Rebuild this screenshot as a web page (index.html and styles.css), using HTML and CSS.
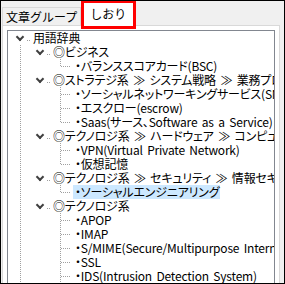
FILE: index.html
```html
<!DOCTYPE html>
<html lang="ja">
<head>
  <meta charset="UTF-8" />
  <title>しおり</title>
  <link rel="stylesheet" href="styles.css">
</head>
<body>
  <div class="window">
    <div class="tabs">
      <div class="tab">文章グループ</div>
      <div class="tab active">しおり</div>
    </div>
    <div class="panel">
      <div class="tree">
        <!-- ルート -->
        <div class="row">
          <span class="cell open"></span>
          <span class="label">用語辞典</span>
        </div>

        <div class="row">
          <span class="cell guide"></span>
          <span class="cell open"></span>
          <span class="label">◎ビジネス</span>
        </div>
        <div class="row">
          <span class="cell guide"></span>
          <span class="cell"></span>
          <span class="cell leaf last"></span>
          <span class="label">・バランススコアカード(BSC)</span>
        </div>

        <div class="row">
          <span class="cell guide"></span>
          <span class="cell open"></span>
          <span class="label">◎ストラテジ系 ≫ システム戦略 ≫ 業務プロセス</span>
        </div>
        <div class="row">
          <span class="cell guide"></span>
          <span class="cell"></span>
          <span class="cell leaf"></span>
          <span class="label">・ソーシャルネットワーキングサービス(SNS)</span>
        </div>
        <div class="row">
          <span class="cell guide"></span>
          <span class="cell"></span>
          <span class="cell leaf"></span>
          <span class="label">・エスクロー(escrow)</span>
        </div>
        <div class="row">
          <span class="cell guide"></span>
          <span class="cell"></span>
          <span class="cell leaf last"></span>
          <span class="label">・Saas(サース、Software as a Service)</span>
        </div>

        <div class="row">
          <span class="cell guide"></span>
          <span class="cell open"></span>
          <span class="label">◎テクノロジ系 ≫ ハードウェア ≫ コンピュータ構成要素</span>
        </div>
        <div class="row">
          <span class="cell guide"></span>
          <span class="cell"></span>
          <span class="cell leaf"></span>
          <span class="label">・VPN(Virtual Private Network)</span>
        </div>
        <div class="row">
          <span class="cell guide"></span>
          <span class="cell"></span>
          <span class="cell leaf last"></span>
          <span class="label">・仮想記憶</span>
        </div>

        <div class="row">
          <span class="cell guide"></span>
          <span class="cell open"></span>
          <span class="label">◎テクノロジ系 ≫ セキュリティ ≫ 情報セキュリティ</span>
        </div>
        <div class="row">
          <span class="cell guide"></span>
          <span class="cell"></span>
          <span class="cell leaf last"></span>
          <span class="label selected">・ソーシャルエンジニアリング</span>
        </div>

        <div class="row">
          <span class="cell guide"></span>
          <span class="cell open"></span>
          <span class="label">◎テクノロジ系</span>
        </div>
        <div class="row">
          <span class="cell guide"></span>
          <span class="cell"></span>
          <span class="cell leaf"></span>
          <span class="label">・APOP</span>
        </div>
        <div class="row">
          <span class="cell guide"></span>
          <span class="cell"></span>
          <span class="cell leaf"></span>
          <span class="label">・IMAP</span>
        </div>
        <div class="row">
          <span class="cell guide"></span>
          <span class="cell"></span>
          <span class="cell leaf"></span>
          <span class="label">・S/MIME(Secure/Multipurpose Internet Mail Extensions)</span>
        </div>
        <div class="row">
          <span class="cell guide"></span>
          <span class="cell"></span>
          <span class="cell leaf"></span>
          <span class="label">・SSL</span>
        </div>
        <div class="row">
          <span class="cell guide"></span>
          <span class="cell"></span>
          <span class="cell leaf"></span>
          <span class="label">・IDS(Intrusion Detection System)</span>
        </div>
      </div>
    </div>
  </div>
</body>
</html>
```

FILE: styles.css
```css
body {
  margin: 0;
  font-family: "MS UI Gothic", "Noto Sans CJK JP", sans-serif;
  font-size: 12px;
  color: #000;
}
.window {
  box-sizing: border-box;
  width: 285px;
  height: 284px;
  border: 1px solid #000;
  background: #f0f0f0;
  overflow: hidden;
  display: flex;
  flex-direction: column;
}
.tabs {
  display: flex;
  align-items: flex-start;
  height: 24px;
  padding-left: 1px;
}
.tab {
  box-sizing: border-box;
  margin-top: 6px;
  height: 18px;
  padding: 0 3px;
  border: 1px solid #d9d9d9;
  border-bottom: none;
  line-height: 17px;
}
.tab.active {
  position: relative;
  z-index: 1;
  margin-top: -1px;
  height: 29px;
  padding: 0 7px 0 6px;
  border: 3px solid #f00;
  background: #fff;
  line-height: 22px;
}
.panel {
  flex: 1;
  margin-left: 1px;
  width: 278px;
  box-sizing: border-box;
  border: 1px solid #d9d9d9;
  border-bottom: none;
  background: #fff;
  padding: 4px 4px 0;
  display: flex;
  flex-direction: column;
}
.tree {
  flex: 1;
  border: 1px solid #828790;
  border-bottom: none;
  padding-left: 2px;
  overflow: hidden;
  font-feature-settings: "palt";
  letter-spacing: -0.2px;
  word-spacing: 2px;
}
.row {
  display: flex;
  height: 14px;
  line-height: 14px;
  white-space: nowrap;
}
.cell {
  flex: none;
  width: 20px;
  height: 14px;
  position: relative;
}
/* 点線 */
.guide::before,
.leaf::before {
  content: "";
  position: absolute;
  left: 10px;
  top: 0;
  width: 1px;
  height: 14px;
  background: repeating-linear-gradient(to bottom, #a0a0a0 0 1px, transparent 1px 2px);
}
.leaf.last::before {
  height: 8px;
}
.leaf::after {
  content: "";
  position: absolute;
  left: 11px;
  top: 7px;
  width: 10px;
  height: 1px;
  background: repeating-linear-gradient(to right, #a0a0a0 0 1px, transparent 1px 2px);
}
/* 開いたノード */
.open::before {
  content: "";
  position: absolute;
  left: 7px;
  top: 3px;
  width: 4px;
  height: 4px;
  border-right: 2px solid #404040;
  border-bottom: 2px solid #404040;
  transform: rotate(45deg);
}
.open::after {
  content: "";
  position: absolute;
  left: 17px;
  top: 9px;
  width: 4px;
  height: 1px;
  background: repeating-linear-gradient(to right, #a0a0a0 0 1px, transparent 1px 2px);
}
.label {
  height: 14px;
  padding: 0 1px;
  margin-left: 2px;
}
.leaf + .label {
  margin-left: 3px;
  padding-left: 2px;
}
.selected {
  background: #cce8ff;
}
```
